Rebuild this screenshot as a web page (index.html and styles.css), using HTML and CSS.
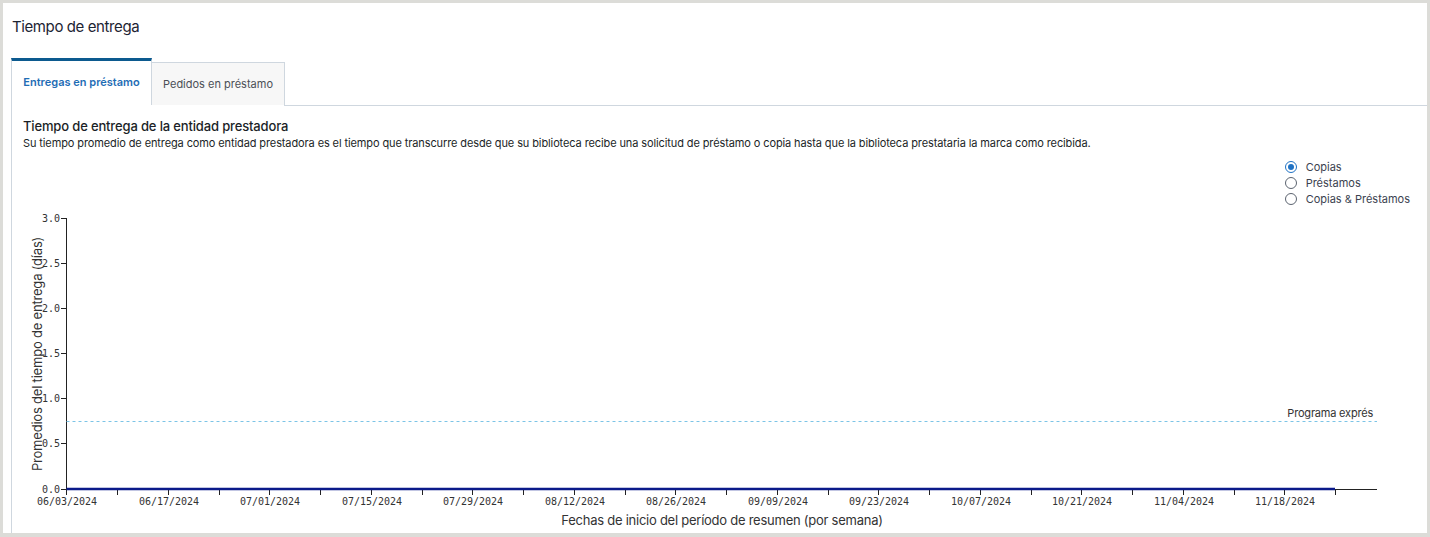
FILE: index.html
```html
<!DOCTYPE html>
<html lang="es">
<head>
<meta charset="utf-8">
<title>Tiempo de entrega</title>
<link rel="stylesheet" href="styles.css">
</head>
<body>
<div class="card">
  <h1 class="title">Tiempo de entrega</h1>
  <div class="tabs">
    <div class="tab tab-active">Entregas en préstamo</div>
    <div class="tab tab-inactive">Pedidos en préstamo</div>
  </div>
  <div class="panel">
    <h2 class="panel-heading">Tiempo de entrega de la entidad prestadora</h2>
    <p class="panel-desc">Su tiempo promedio de entrega como entidad prestadora es el tiempo que transcurre desde que su biblioteca recibe una solicitud de préstamo o copia hasta que la biblioteca prestataria la marca como recibida.</p>
    <div class="radios">
      <label class="radio"><span class="dot dot-on"></span>Copias</label>
      <label class="radio"><span class="dot"></span>Préstamos</label>
      <label class="radio"><span class="dot"></span>Copias &amp; Préstamos</label>
    </div>
    <svg class="chart" width="1414" height="326" viewBox="12 207 1414 326" xmlns="http://www.w3.org/2000/svg">
      <g class="yaxis">
        <line x1="67.5" y1="218" x2="67.5" y2="489" />
        <line x1="62" y1="218.5" x2="67.5" y2="218.5" />
        <line x1="62" y1="263.5" x2="67.5" y2="263.5" />
        <line x1="62" y1="308.5" x2="67.5" y2="308.5" />
        <line x1="62" y1="353.5" x2="67.5" y2="353.5" />
        <line x1="62" y1="398.5" x2="67.5" y2="398.5" />
        <line x1="62" y1="443.5" x2="67.5" y2="443.5" />
        <line x1="62" y1="489.5" x2="67.5" y2="489.5" />
        <text x="61" y="222">3.0</text>
        <text x="61" y="267">2.5</text>
        <text x="61" y="312">2.0</text>
        <text x="61" y="357">1.5</text>
        <text x="61" y="402">1.0</text>
        <text x="61" y="447">0.5</text>
        <text x="61" y="493">0.0</text>
      </g>
      <line class="express" x1="67.5" y1="421.5" x2="1378" y2="421.5" />
      <text class="express-label" x="1374" y="417">Programa exprés</text>
      <g class="xaxis" id="xaxis">
        <line x1="67.5" y1="489.5" x2="1378" y2="489.5" />
      </g>
      <line class="series" x1="67.5" y1="489" x2="1336" y2="489" />
      <text class="ylabel" transform="translate(43 354) rotate(-90)">Promedios del tiempo de entrega (días)</text>
      <text class="xlabel" x="723" y="525">Fechas de inicio del período de resumen (por semana)</text>
    </svg>
  </div>
</div>
<script>
(function () {
  var g = document.getElementById('xaxis');
  var ns = 'http://www.w3.org/2000/svg';
  var labels = ['06/03/2024','06/17/2024','07/01/2024','07/15/2024','07/29/2024','08/12/2024','08/26/2024','09/09/2024','09/23/2024','10/07/2024','10/21/2024','11/04/2024','11/18/2024'];
  var x0 = 67.5, step = (1336 - 67.5) / 25;
  for (var i = 0; i <= 25; i++) {
    var x = Math.round(x0 + i * step) + 0.5;
    if (i === 0) x = 67.5;
    var t = document.createElementNS(ns, 'line');
    t.setAttribute('x1', x); t.setAttribute('x2', x);
    t.setAttribute('y1', 489); t.setAttribute('y2', 495);
    g.appendChild(t);
    if (i % 2 === 0 && labels[i / 2]) {
      var tx = document.createElementNS(ns, 'text');
      tx.setAttribute('x', x + 0.5); tx.setAttribute('y', 505);
      tx.textContent = labels[i / 2];
      g.appendChild(tx);
    }
  }
})();
</script>
</body>
</html>
```

FILE: styles.css
```css
* { box-sizing: border-box; }
html, body { margin: 0; padding: 0; }
body {
  background: #dcdcd8;
  font-family: Inter, "Noto Sans", "Liberation Sans", sans-serif;
  color: #1d2433;
  width: 1430px;
  height: 537px;
  overflow: hidden;
  padding: 3px 3px 4px 3px;
}
.card {
  background: #ffffff;
  height: 530px;
  width: 1424px;
  padding: 0 0 0 8px;
  display: flex;
  flex-direction: column;
}
.title {
  margin: 0;
  font-size: 15px;
  font-weight: 400;
  line-height: 20px;
  letter-spacing: -0.4px;
  padding: 14px 0 0 1px;
  height: 55px;
}
.tabs {
  display: flex;
  align-items: flex-end;
  height: 47px;
}
.tab {
  font-size: 11px;
  display: flex;
  align-items: center;
  justify-content: center;
}
.tab-active {
  width: 141px;
  height: 47px;
  border-top: 3px solid #0c5a8f;
  border-left: 1px solid #cfd7df;
  border-right: 1px solid #cfd7df;
  color: #1f6db5;
  font-weight: 600;
  background: #fff;
  padding-bottom: 2px;
}
.tab-inactive {
  width: 133px;
  height: 43px;
  border: 1px solid #cfd7df;
  border-bottom: none;
  border-left: none;
  background: #f7f7f7;
  color: #4b4f56;
}
.panel {
  flex: 1;
  border-left: 1px solid #cfd7df;
  position: relative;
  display: flex;
  flex-direction: column;
  padding-top: 12px;
}
.panel::before {
  content: "";
  position: absolute;
  top: 0;
  left: 272px;
  right: 0;
  border-top: 1px solid #cfd7df;
}
.panel-heading {
  margin: 0 0 0 11px;
  font-size: 13px;
  font-weight: 500;
  line-height: 18px;
  letter-spacing: -0.15px;
  color: #1b1f27;
}
.panel-desc {
  margin: 0 0 0 11px;
  font-size: 11px;
  line-height: 16px;
  letter-spacing: -0.11px;
  color: #1b1f27;
}
.radios {
  align-self: flex-end;
  margin: 8px 17px 0 0;
  display: flex;
  flex-direction: column;
}
.radio {
  display: flex;
  align-items: center;
  font-size: 11px;
  line-height: 16px;
  color: #3b4250;
}
.dot {
  width: 12px;
  height: 12px;
  border: 1.5px solid #5c6470;
  border-radius: 50%;
  margin-right: 9px;
  display: inline-flex;
  align-items: center;
  justify-content: center;
}
.dot-on {
  border-color: #1f72c4;
}
.dot-on::after {
  content: "";
  width: 6px;
  height: 6px;
  border-radius: 50%;
  background: #1f72c4;
}
.chart {
  display: block;
  margin-left: -1px;
}
.yaxis line, .xaxis line {
  stroke: #222;
  stroke-width: 1;
}
.yaxis text {
  font-family: "DejaVu Sans Mono", monospace;
  font-size: 10px;
  fill: #333;
  text-anchor: end;
}
.xaxis text {
  font-family: "DejaVu Sans Mono", monospace;
  font-size: 10px;
  fill: #333;
  text-anchor: middle;
}
.express {
  stroke: #7cc4e6;
  stroke-width: 1;
  stroke-dasharray: 3 3;
}
.express-label {
  font-family: Inter, "Noto Sans", sans-serif;
  font-size: 11px;
  letter-spacing: -0.2px;
  fill: #333;
  text-anchor: end;
}
.series {
  stroke: #0b1a8a;
  stroke-width: 2.5;
}
.ylabel, .xlabel {
  font-family: Inter, "Noto Sans", sans-serif;
  font-size: 13px;
  fill: #333;
  text-anchor: middle;
}
.ylabel { letter-spacing: -0.2px; }
.xlabel { letter-spacing: -0.25px; }
```
